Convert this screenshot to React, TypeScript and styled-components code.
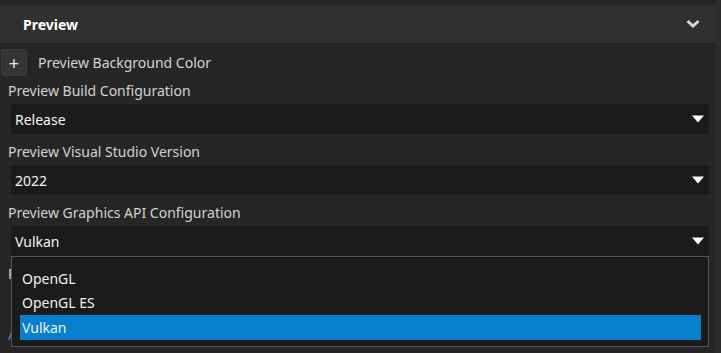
import React from 'react';
import styled, { createGlobalStyle } from 'styled-components';

const GlobalStyle = createGlobalStyle`
  body {
    margin: 0;
    background: #262626;
    font-family: 'Noto Sans', 'Open Sans', sans-serif;
  }
`;

interface IField {
  label: string;
  value: string;
  open?: boolean;
  options?: string[];
}

const fields: IField[] = [
  { label: 'Preview Build Configuration', value: 'Release' },
  { label: 'Preview Visual Studio Version', value: '2022' },
  {
    label: 'Preview Graphics API Configuration',
    value: 'Vulkan',
    open: true,
    options: ['OpenGL', 'OpenGL ES', 'Vulkan'],
  },
];

const Chevron = () => (
  <svg width="14" height="10" viewBox="0 0 14 10">
    <path d="M1.5 2 L7 7 L12.5 2" fill="none" stroke="#d6d6d6" strokeWidth="3" />
  </svg>
);

const Caret = () => (
  <svg width="12" height="8" viewBox="0 0 12 8">
    <path d="M0 0.5 H12 L6 7.5 Z" fill="#ffffff" />
  </svg>
);

const App: React.FC = () => {
  return (
    <Root>
      <GlobalStyle />
      <Main>
        <TopGap />
        <Header>
          <Title>Preview</Title>
          <Chevron />
        </Header>
        <Body>
          <ColorRow>
            <PlusButton>+</PlusButton>
            <ColorLabel>Preview Background Color</ColorLabel>
          </ColorRow>
          {fields.map((f) => (
            <Field key={f.label}>
              <Label>{f.label}</Label>
              <Select>
                <span>{f.value}</span>
                <Caret />
              </Select>
              {f.open && (
                <Popup>
                  {f.options?.map((o) => (
                    <Option key={o} selected={o === f.value}>
                      {o}
                    </Option>
                  ))}
                </Popup>
              )}
            </Field>
          ))}
          <Label>Preview Platform</Label>
          <Select>
            <span>Windows</span>
            <Caret />
          </Select>
          <Link>Apply</Link>
        </Body>
      </Main>
      <Gutter />
    </Root>
  );
};

export default App;

const Root = styled.div`
  display: flex;
  width: 721px;
  height: 353px;
  overflow: hidden;
  background: #262626;
`;

const Main = styled.div`
  flex: 1;
  display: flex;
  flex-direction: column;
`;

const Gutter = styled.div`
  width: 6px;
  background: #2c2c2c;
`;

const TopGap = styled.div`
  height: 5px;
  background: #252525;
`;

const Header = styled.div`
  display: flex;
  align-items: center;
  justify-content: space-between;
  height: 38px;
  padding: 0 15px 0 23px;
  background: #303030;
  border-bottom: 1px solid #1f1f1f;
`;

const Title = styled.h3`
  margin: 0;
  color: #ffffff;
  font-size: 14px;
  font-weight: 700;
`;

const Body = styled.div`
  display: flex;
  flex-direction: column;
  padding: 5px 6px 0 0;
`;

const ColorRow = styled.div`
  display: flex;
  align-items: center;
  padding-left: 1px;
`;

const PlusButton = styled.button`
  width: 26px;
  height: 27px;
  padding: 0;
  border: 1px solid #3a3a3a;
  border-radius: 3px;
  background: #353535;
  color: #e6e6e6;
  font-family: 'Noto Sans', sans-serif;
  font-size: 18px;
  line-height: 24px;
`;

const ColorLabel = styled.span`
  margin-left: 11px;
  color: #d2d2d2;
  font-size: 14px;
`;

const Field = styled.div`
  position: relative;
  display: flex;
  flex-direction: column;
  margin-bottom: 3px;
`;

const Label = styled.div`
  display: flex;
  align-items: center;
  height: 28px;
  padding-left: 8px;
  color: #d2d2d2;
  font-size: 14px;
`;

const Select = styled.div`
  display: flex;
  align-items: center;
  justify-content: space-between;
  height: 30px;
  margin-left: 11px;
  padding: 0 5px 0 4px;
  background: #1b1b1b;
  color: #f5f5f5;
  font-size: 14px;
`;

const Popup = styled.div`
  position: absolute;
  top: 100%;
  left: 11px;
  right: 0;
  z-index: 2;
  padding: 9px 7px 6px 8px;
  background: #1b1b1b;
  border: 1px solid #555555;
`;

const Option = styled.div<{ selected?: boolean }>`
  display: flex;
  align-items: center;
  height: 24.5px;
  padding-left: 2px;
  color: #f0f0f0;
  font-size: 14px;
  background: ${({ selected }) => (selected ? '#067fcc' : 'transparent')};
`;

const Link = styled.div`
  padding: 8px 0 0 8px;
  color: #3a8fd8;
  font-size: 14px;
`;
